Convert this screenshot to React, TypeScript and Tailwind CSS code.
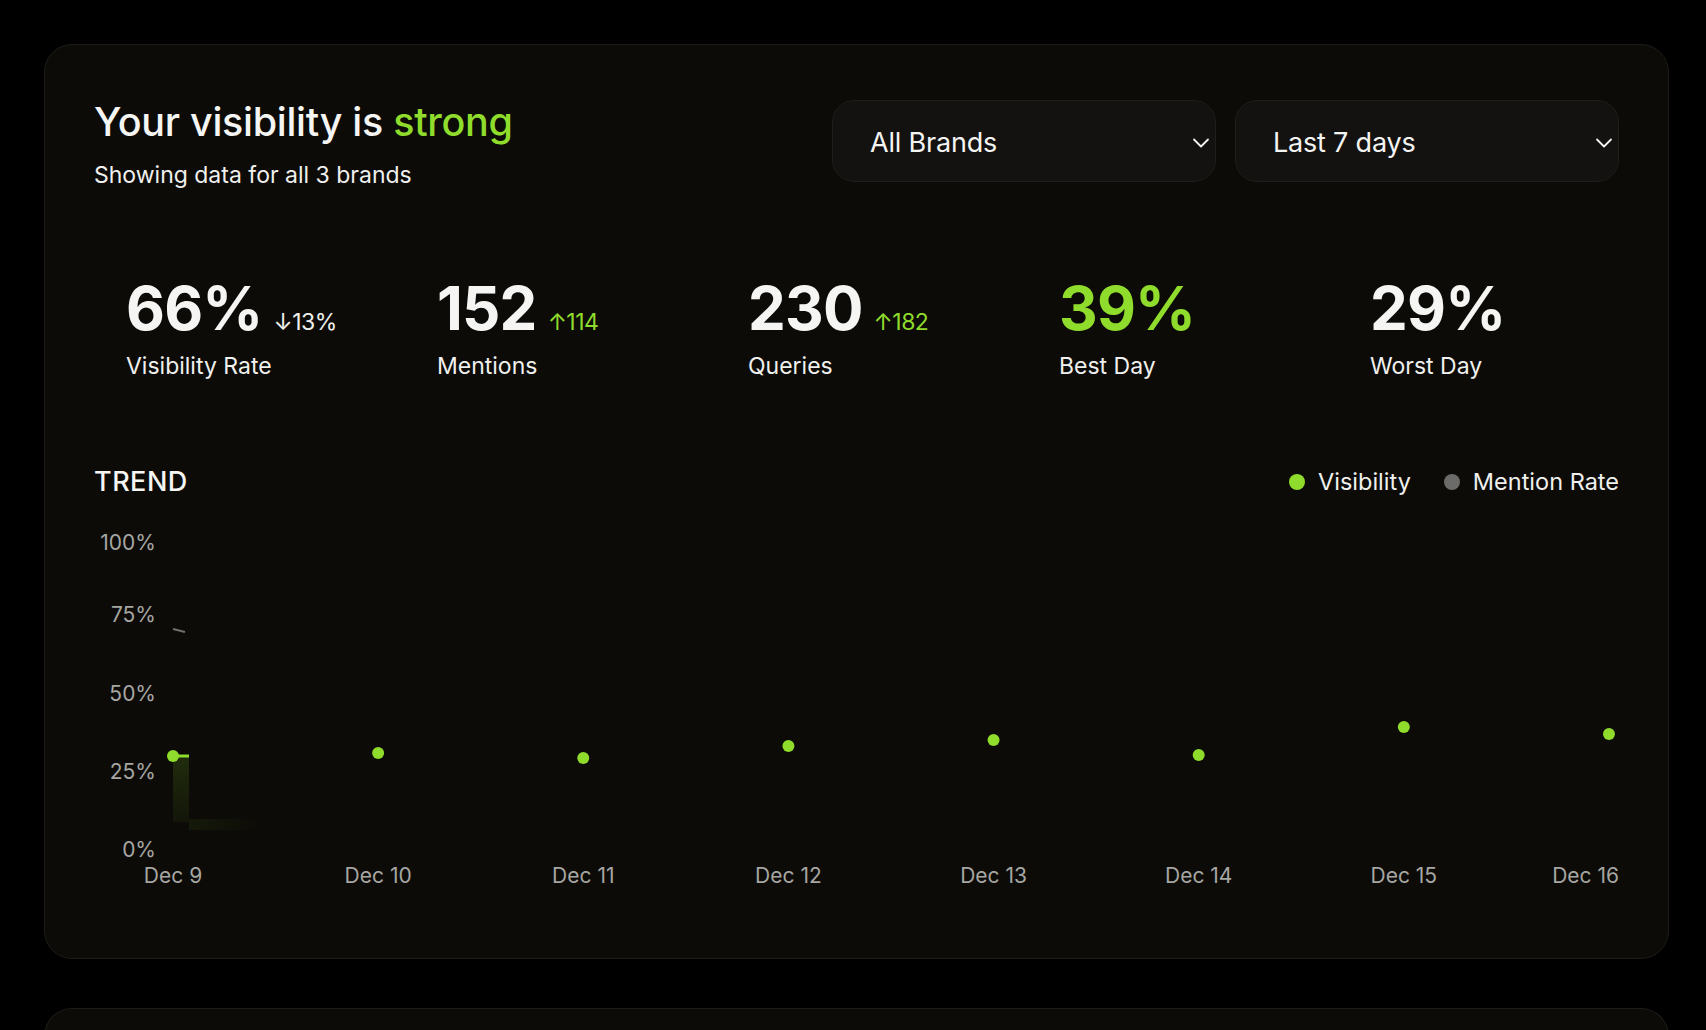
import React from "react";

const GREEN = "#8fdc2c";

function Chevron() {
  return (
    <svg width="18" height="10" viewBox="0 0 18 10" fill="none">
      <path d="M2 1.5L9 8.5L16 1.5" stroke="#f2f2f2" strokeWidth="1.8" strokeLinecap="round" strokeLinejoin="round" />
    </svg>
  );
}

function Dropdown({ label }: { label: string }) {
  return (
    <div className="flex h-[82px] w-[384px] items-center justify-between rounded-[22px] border border-[#1f1e1a] bg-[#131210] pl-[37px] pr-[5px] pt-[4px]">
      <span className="text-[27px] tracking-[-0.2px] text-[#f4f4f2]">{label}</span>
      <Chevron />
    </div>
  );
}

type Stat = { value: string; label: string; delta?: string; dir?: "up" | "down"; green?: boolean };

const stats: Stat[] = [
  { value: "66%", label: "Visibility Rate", delta: "13%", dir: "down" },
  { value: "152", label: "Mentions", delta: "114", dir: "up" },
  { value: "230", label: "Queries", delta: "182", dir: "up" },
  { value: "39%", label: "Best Day", green: true },
  { value: "29%", label: "Worst Day" },
];

function StatBlock({ s }: { s: Stat }) {
  return (
    <div className="flex w-[311px] shrink-0 flex-col">
      <div className="flex items-baseline gap-[11px]">
        <span className={`text-[60px] font-bold leading-[60px] tracking-[-0.8px] ${s.green ? "text-[#8fdc2c]" : "text-[#f5f5f3]"}`}>
          {s.value}
        </span>
        {s.delta && (
          <span className={`text-[23px] leading-[28px] tracking-[-0.5px] ${s.dir === "up" ? "text-[#8fdc2c]" : "text-[#f0f0ee]"}`}>
            {s.dir === "up" ? "↑" : "↓"}
            {s.delta}
          </span>
        )}
      </div>
      <span className="mt-[14px] text-[23px] leading-[28px] text-[#f0f0ee]">{s.label}</span>
    </div>
  );
}

const yLabels = [
  { t: "100%", y: 51 },
  { t: "75%", y: 123 },
  { t: "50%", y: 202 },
  { t: "25%", y: 280 },
  { t: "0%", y: 358 },
];

const days = ["Dec 9", "Dec 10", "Dec 11", "Dec 12", "Dec 13", "Dec 14", "Dec 15", "Dec 16"];
const dotY = [257, 254, 259, 247, 241, 256, 228, 235];

function Chart() {
  const x0 = 79;
  const step = 205.14;
  return (
    <svg width="1525" height="400" viewBox="0 0 1525 400" className="mt-[1px] block">
      <defs>
        <linearGradient id="area" x1="0" y1="0" x2="0" y2="1">
          <stop offset="0%" stopColor={GREEN} stopOpacity="0.16" />
          <stop offset="100%" stopColor={GREEN} stopOpacity="0.05" />
        </linearGradient>
        <linearGradient id="band" x1="0" y1="0" x2="1" y2="0">
          <stop offset="0%" stopColor={GREEN} stopOpacity="0.07" />
          <stop offset="100%" stopColor={GREEN} stopOpacity="0" />
        </linearGradient>
      </defs>
      {yLabels.map((l) => (
        <text key={l.t} x="62" y={l.y} textAnchor="end" fontSize="21" fill="#a6a6a3" fontFamily="Inter, sans-serif">
          {l.t}
        </text>
      ))}
      {days.map((d, i) => (
        <text
          key={d}
          x={i === 7 ? 1525 : x0 + i * step}
          y="384"
          textAnchor={i === 7 ? "end" : "middle"}
          fontSize="21"
          fill="#a6a6a3"
          fontFamily="Inter, sans-serif"
        >
          {d}
        </text>
      ))}
      {/* animation artifacts */}
      <line x1="79" y1="130" x2="91" y2="133" stroke="#6f6f6c" strokeWidth="2" />
      <rect x="79" y="257" width="16" height="66" fill="url(#area)" />
      <rect x="95" y="320" width="72" height="11" fill="url(#band)" />
      <line x1="79" y1="257" x2="95" y2="257" stroke={GREEN} strokeWidth="3" />
      {dotY.map((y, i) => (
        <circle key={i} cx={x0 + i * step} cy={y} r="6" fill={GREEN} />
      ))}
    </svg>
  );
}

export default function App() {
  return (
    <div className="min-h-screen bg-black pt-[44px] font-['Inter',sans-serif]">
      <div className="ml-[44px] h-[915px] w-[1625px] overflow-hidden rounded-[28px] border border-[#1d1c18] bg-[#0c0b07] px-[49px] pt-[55px]">
        <div className="flex items-start justify-between">
          <div className="flex flex-col pt-[2px]">
            <h1 className="text-[39.5px] font-medium leading-[40px] tracking-[-0.3px] text-[#f5f5f3]">
              Your visibility is <span className="text-[#8fdc2c]">strong</span>
            </h1>
            <p className="mt-[19px] text-[23px] leading-[28px] text-[#f0f0ee]">Showing data for all 3 brands</p>
          </div>
          <div className="flex gap-[19px]">
            <Dropdown label="All Brands" />
            <Dropdown label="Last 7 days" />
          </div>
        </div>

        <div className="mt-[89px] flex pl-[32px]">
          {stats.map((s) => (
            <StatBlock key={s.label} s={s} />
          ))}
        </div>

        <div className="mt-[86px] flex h-[32px] items-center justify-between">
          <span className="text-[27px] font-medium leading-[32px] tracking-[0.5px] text-[#f5f5f3]">TREND</span>
          <div className="flex items-center gap-[33px]">
            <div className="flex items-center gap-[13px]">
              <span className="h-[16px] w-[16px] rounded-full bg-[#8fdc2c]" />
              <span className="text-[23.5px] text-[#f0f0ee]">Visibility</span>
            </div>
            <div className="flex items-center gap-[13px]">
              <span className="h-[16px] w-[16px] rounded-full bg-[#6b6b69]" />
              <span className="text-[23.5px] text-[#f0f0ee]">Mention Rate</span>
            </div>
          </div>
        </div>

        <Chart />
      </div>
      <div className="ml-[44px] mt-[49px] h-[60px] w-[1625px] rounded-t-[28px] border border-b-0 border-[#1d1c18] bg-[#0c0b07]" />
    </div>
  );
}
